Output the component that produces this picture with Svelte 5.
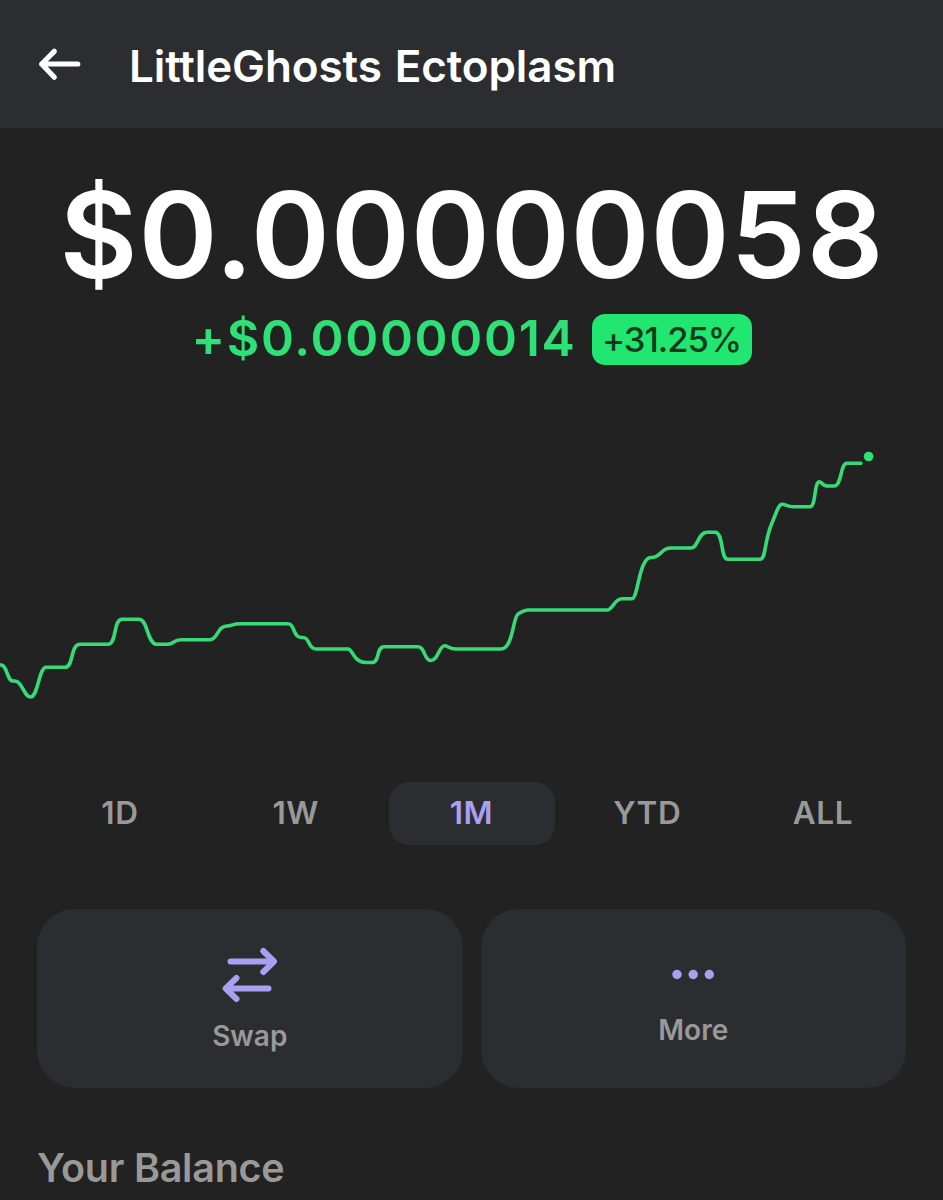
<script lang="ts">
  const tokenName = 'LittleGhosts Ectoplasm';
  const price = '$0.00000058';
  const change = '+$0.00000014';
  const changePercent = '+31.25%';

  const ranges = ['1D', '1W', '1M', 'YTD', 'ALL'];
  let selected = $state('1M');

  const linePath = [
    'M-2 665 H1 C7 665 7 681 13 681 H15 C22 681 24 697 30.5 697',
    'C38 697 39 667.3 46 667.3 H65 C74 667.3 70 644.3 80 644.3 H108',
    'C117 644.3 113 619.3 122 619.3 H139 C148 619.3 147 644.3 157 644.3 H168',
    'C174 644.3 173 639.7 181 639.7 H210 C218 639.7 217 626 227 626',
    'C232 626 232 623.8 240 623.8 H288 C295 623.8 293 637.5 301 637.5 H303',
    'C310 637.5 308 649 316 649 H348 C353 649 353 662.5 366 662.5 H372',
    'C380 662.5 376 646.7 384 646.7 H418 C425 646.7 424 660.5 431 660.5',
    'C438 660.5 439 645.8 444.5 645.8 C448 645.8 449 649 456 649 H501',
    'C513 649 513 617 518 614 C520 613.3 523 610 528 610 H607',
    'C613 610 614 598.7 622 598.7 H632 C638 598.7 639 557.5 651 557.5',
    'C662 557.5 660 548 671 548 H691 C698 548 698 532.2 707 532.2 H715',
    'C724 532.2 720 559.3 728 559.3 H760 C766 559.3 764 543 771 525.5',
    'L777 510.5 C782 499 784 506.8 793 506.8 H810',
    'C816 506.8 814 481.8 819.5 481.8 C822 481.8 822 486 828 486 H834',
    'C842 486 840 463.3 847 463.3 H861'
  ].join(' ');
</script>

<main class="screen">
  <header class="header">
    <button type="button" class="back" aria-label="Back">
      <svg width="44" height="34" viewBox="0 0 44 34" aria-hidden="true">
        <path d="M17.3 4.3 L4.7 17 L17.3 30.2 M4.7 17 H40.8" />
      </svg>
    </button>
    <h1>{tokenName}</h1>
  </header>

  <section class="summary">
    <div class="price">{price}</div>
    <div class="change">
      <span class="amount">{change}</span>
      <span class="badge">{changePercent}</span>
    </div>
  </section>

  <svg class="chart" width="943" height="342" viewBox="0 410 943 342" aria-hidden="true">
    <path d={linePath} />
    <circle cx="868.6" cy="456.5" r="4.8" />
  </svg>

  <nav class="ranges">
    {#each ranges as range}
      <button
        type="button"
        class="range"
        class:active={selected === range}
        onclick={() => (selected = range)}
      >{range}</button>
    {/each}
  </nav>

  <div class="actions">
    <button type="button" class="action">
      <svg class="swap" width="56" height="56" viewBox="0 0 56 56" aria-hidden="true">
        <path d="M8.5 14.5 H51 M41.3 4 L52 14.5 L41.3 25" />
        <path d="M46.5 41.5 H4 M14.5 31 L3.7 41.5 L14.5 52" />
      </svg>
      <span>Swap</span>
    </button>
    <button type="button" class="action">
      <svg class="dots" width="44" height="44" viewBox="0 0 44 44" aria-hidden="true">
        <circle cx="6" cy="21.5" r="4.7" />
        <circle cx="22.2" cy="21.5" r="4.7" />
        <circle cx="38.3" cy="21.5" r="4.7" />
      </svg>
      <span>More</span>
    </button>
  </div>

  <h2>Your Balance</h2>
</main>

<style>
  :global(body) {
    background: #222222;
  }

  .screen {
    width: 943px;
    height: 1200px;
    overflow: hidden;
    display: flex;
    flex-direction: column;
    background: #222222;
    color: #ffffff;
    font-family: Inter, "Liberation Sans", sans-serif;
  }

  button {
    border: 0;
    padding: 0;
    background: transparent;
    font: inherit;
    color: inherit;
    cursor: pointer;
  }

  /* Header */
  .header {
    flex: none;
    height: 128px;
    box-sizing: border-box;
    padding: 4px 37px 0;
    display: flex;
    align-items: center;
    gap: 48px;
    background: #2c2d31;
  }

  .back {
    display: flex;
    margin-bottom: 4px;
  }

  .back path {
    fill: none;
    stroke: #ffffff;
    stroke-width: 5.2;
    stroke-linecap: round;
    stroke-linejoin: round;
  }

  h1 {
    margin: 0;
    font-size: 44px;
    line-height: 54px;
    font-weight: 600;
    letter-spacing: -0.1px;
    word-spacing: 2px;
    white-space: nowrap;
  }

  /* Price */
  .summary {
    flex: none;
    height: 282px;
    display: flex;
    flex-direction: column;
    align-items: center;
  }

  .price {
    margin-top: 37px;
    padding-left: 1px;
    font-size: 120px;
    line-height: 140px;
    font-weight: 600;
    letter-spacing: 0.8px;
    white-space: nowrap;
  }

  .change {
    margin-top: 9px;
    height: 51px;
    display: flex;
    align-items: center;
    gap: 15px;
  }

  .amount {
    margin-bottom: 2px;
    font-size: 50px;
    line-height: 51px;
    font-weight: 600;
    letter-spacing: 1.7px;
    color: #2ee076;
  }

  .badge {
    width: 160px;
    height: 51px;
    border-radius: 13px;
    background: #21e66f;
    color: #0b3a1e;
    font-size: 34.5px;
    line-height: 51px;
    font-weight: 550;
    letter-spacing: -1px;
    text-align: center;
  }

  /* Chart */
  .chart {
    flex: none;
    display: block;
  }

  .chart path {
    fill: none;
    stroke: #36db78;
    stroke-width: 3.6;
    stroke-linecap: round;
    stroke-linejoin: round;
  }

  .chart circle {
    fill: #2ee076;
  }

  .ranges {
    flex: none;
    margin: 30px 37px 0;
    display: flex;
    justify-content: space-between;
  }

  .range {
    width: 166px;
    height: 63px;
    padding-bottom: 2px;
    border-radius: 20px;
    color: #999999;
    font-size: 31.5px;
    line-height: 61px;
    font-weight: 600;
    letter-spacing: 0.6px;
  }

  .range.active {
    background: #2c2d31;
    color: #ab9ff2;
  }

  /* Actions */
  .actions {
    flex: none;
    margin: 64px 37px 0;
    display: grid;
    grid-template-columns: 1fr 1fr;
    gap: 18px;
  }

  .action {
    height: 179px;
    padding-top: 2px;
    border-radius: 38px;
    background: #2c2d31;
    color: #999999;
    display: flex;
    flex-direction: column;
    align-items: center;
    justify-content: center;
    gap: 16px;
    font-size: 28px;
    line-height: 34px;
    font-weight: 600;
  }

  .swap path {
    fill: none;
    stroke: #ab9ff2;
    stroke-width: 6;
    stroke-linecap: round;
    stroke-linejoin: round;
  }

  .dots circle {
    fill: #ab9ff2;
  }

  h2 {
    margin: 56px 37px 0;
    font-size: 39.5px;
    line-height: 48px;
    font-weight: 600;
    letter-spacing: -0.25px;
    color: #999999;
    white-space: nowrap;
  }
</style>
